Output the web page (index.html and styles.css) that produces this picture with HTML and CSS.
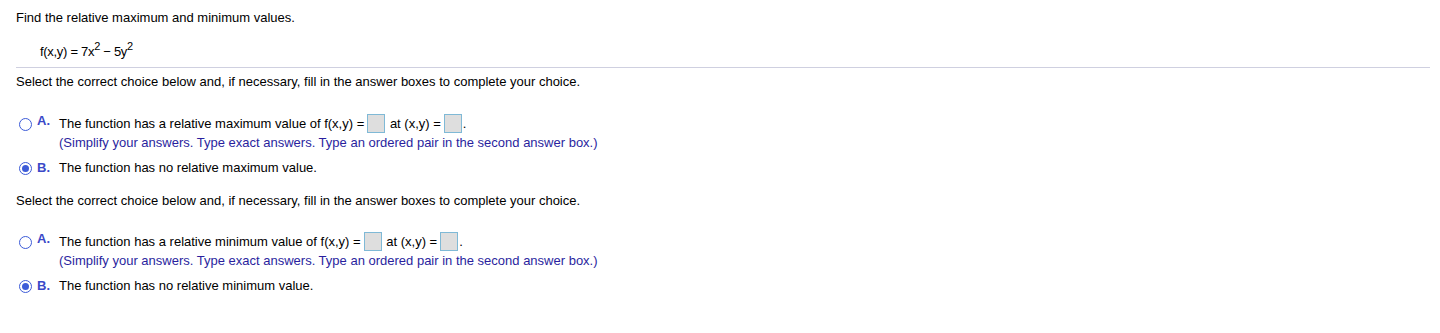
FILE: index.html
```html
<!DOCTYPE html>
<html lang="en">
<head>
    <meta charset="UTF-8">
    <title>Relative Extrema</title>
    <link rel="stylesheet" href="styles.css">
</head>
<body>
<div class="page">
    <p class="prompt">Find the relative maximum and minimum values.</p>
    <p class="formula">f(x,y) = 7x<sup>2</sup> &minus; 5y<sup>2</sup></p>
    <hr class="divider">

    <div class="part">
        <p class="instruction">Select the correct choice below and, if necessary, fill in the answer boxes to complete your choice.</p>
        <div class="choice first">
            <span class="radio"></span>
            <span class="letter">A.</span>
            <div class="body">
                <div class="line">The function has a relative maximum value of f(x,y) =<span class="box"></span> at (x,y) =<span class="box"></span>.</div>
                <div class="hint">(Simplify your answers. Type exact answers. Type an ordered pair in the second answer box.)</div>
            </div>
        </div>
        <div class="choice">
            <span class="radio checked"></span>
            <span class="letter">B.</span>
            <div class="body">
                <div class="line">The function has no relative maximum value.</div>
            </div>
        </div>
    </div>

    <div class="part">
        <p class="instruction">Select the correct choice below and, if necessary, fill in the answer boxes to complete your choice.</p>
        <div class="choice first">
            <span class="radio"></span>
            <span class="letter">A.</span>
            <div class="body">
                <div class="line">The function has a relative minimum value of f(x,y) =<span class="box"></span> at (x,y) =<span class="box"></span>.</div>
                <div class="hint">(Simplify your answers. Type exact answers. Type an ordered pair in the second answer box.)</div>
            </div>
        </div>
        <div class="choice">
            <span class="radio checked"></span>
            <span class="letter">B.</span>
            <div class="body">
                <div class="line">The function has no relative minimum value.</div>
            </div>
        </div>
    </div>
</div>
</body>
</html>
```

FILE: styles.css
```css
body {
    margin: 0;
    font-family: "Liberation Sans", Arial, sans-serif;
    font-size: 13px;
    color: #000;
    background: #fff;
}
.page {
    padding: 10px 10px 0 16px;
}
p {
    margin: 0;
}
.prompt {
    line-height: 16px;
}
.formula {
    margin-top: 18px;
    padding-left: 24px;
    font-size: 13px;
    line-height: 16px;
    letter-spacing: -0.3px;
}
.formula sup {
    font-size: 11px;
    line-height: 0;
    vertical-align: 6px;
}
.divider {
    margin: 7px 0 0 0;
    border: none;
    border-top: 1px solid #cfd0e0;
}
.instruction {
    margin-top: 6px;
    line-height: 16px;
}
.part + .part .instruction {
    margin-top: 16px;
}
.choice {
    display: flex;
    align-items: flex-start;
    margin-top: 6px;
}
.choice.first {
    margin-top: 24px;
}
.part + .part .choice.first {
    margin-top: 23px;
}
.radio {
    width: 11px;
    height: 11px;
    margin: 4px 0 0 3px;
    border: 1.5px solid #3c5bd8;
    border-radius: 50%;
    position: relative;
    flex: none;
}
.radio.checked::after {
    content: "";
    position: absolute;
    left: 2px;
    top: 2px;
    width: 7px;
    height: 7px;
    border-radius: 50%;
    background: #3c5bd8;
}
.letter {
    width: 22px;
    margin-left: 5px;
    font-weight: bold;
    color: #3b49c8;
    line-height: 19px;
    flex: none;
}
.choice.first .letter {
    line-height: 15px;
    margin-top: -1px;
}
.line {
    line-height: 19px;
}
.hint {
    color: #2a1f9e;
    line-height: 19px;
}
.box {
    display: inline-block;
    width: 16px;
    height: 17px;
    border: 1px solid #7fb9d6;
    background: #dedede;
    vertical-align: middle;
    margin: -2px 1px 0 3px;
}
```
